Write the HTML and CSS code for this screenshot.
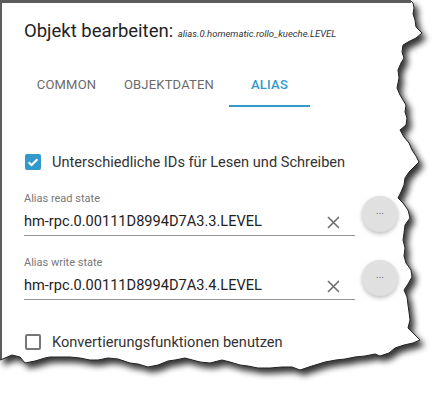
FILE: index.html
```html
<!DOCTYPE html>
<html lang="de">
<head>
    <meta charset="UTF-8">
    <meta name="viewport" content="width=device-width, initial-scale=1.0">
    <title>Objekt bearbeiten</title>
    <link rel="stylesheet" href="styles.css">
</head>
<body>
    <div class="page">
        <!-- torn paper frame, drawn behind the dialog -->
        <svg class="frame" width="444" height="400" viewBox="0 0 444 400">
            <defs>
                <filter id="shadow" x="-10%" y="-10%" width="130%" height="130%">
                    <feGaussianBlur in="SourceAlpha" stdDeviation="3"/>
                    <feOffset dx="4" dy="5"/>
                    <feComponentTransfer><feFuncA type="linear" slope="0.8"/></feComponentTransfer>
                    <feMerge><feMergeNode/><feMergeNode in="SourceGraphic"/></feMerge>
                </filter>
            </defs>
            <path filter="url(#shadow)" fill="#fff" stroke="#222" stroke-width="1"
                d="M0,0 L410,0 L413,3 L414,8 L413,14 L415,20 L416,27 L420,31 L422,33 L416,38 L408,42 L403,45 L402,52 L404,58 L401,63 L398,70 L399,78 L397,88 L400,95 L403,100 L406,105 L405,112 L407,118 L406,125 L400,130 L404,137 L409,143 L412,150 L416,156 L419,162 L414,167 L409,172 L405,178 L404,185 L401,192 L398,198 L403,203 L408,210 L410,218 L405,225 L404,233 L403,240 L405,248 L404,256 L406,263 L411,270 L412,277 L408,284 L404,290 L407,297 L408,305 L409,312 L410,320 L408,328 L414,334 L420,340 L413,343 L404,345 L395,348 L389,353 L380,356 L375,354 L365,356 L355,357 L345,359 L336,360 L325,362 L312,366 L300,370 L292,367 L282,367 L270,368 L258,368 L248,366 L240,365 L230,362 L222,360 L210,363 L200,362 L185,358 L175,360 L168,361 L158,365 L148,367 L138,364 L130,363 L118,359 L108,358 L98,360 L90,360 L80,358 L70,357 L60,357 L50,357 L45,358 L35,361 L25,363 L20,357 L12,355 L5,358 L0,360 Z"/>
            <rect x="0" y="0" width="411" height="3" fill="#5c5c5c"/>
            <rect x="0" y="0" width="2" height="359" fill="#5c5c5c"/>
        </svg>

        <div class="dialog">
            <div class="title">Objekt bearbeiten: <span class="obj-id">alias.0.homematic.rollo_kueche.LEVEL</span></div>

            <div class="tabs">
                <div class="tab tab-common">COMMON</div>
                <div class="tab tab-data">OBJEKTDATEN</div>
                <div class="tab tab-alias active">ALIAS</div>
            </div>

            <div class="check-row">
                <span class="box checked">
                    <svg width="16" height="16" viewBox="0 0 16 16"><polyline points="3.6,8.2 6.6,11 12.4,5.2" fill="none" stroke="#fff" stroke-width="2"/></svg>
                </span>
                <span class="check-label">Unterschiedliche IDs für Lesen und Schreiben</span>
            </div>

            <div class="field-row">
                <div class="field">
                    <div class="field-label">Alias read state</div>
                    <div class="field-input">
                        <span class="value">hm-rpc.0.00111D8994D7A3.3.LEVEL</span>
                        <svg class="clear" width="13" height="13" viewBox="0 0 13 13"><path d="M1 1 L12 12 M12 1 L1 12" stroke="#6f6f6f" stroke-width="1.6"/></svg>
                    </div>
                </div>
                <div class="more">...</div>
            </div>

            <div class="field-row second">
                <div class="field">
                    <div class="field-label">Alias write state</div>
                    <div class="field-input">
                        <span class="value">hm-rpc.0.00111D8994D7A3.4.LEVEL</span>
                        <svg class="clear" width="13" height="13" viewBox="0 0 13 13"><path d="M1 1 L12 12 M12 1 L1 12" stroke="#6f6f6f" stroke-width="1.6"/></svg>
                    </div>
                </div>
                <div class="more">...</div>
            </div>

            <div class="check-row last">
                <span class="box"></span>
                <span class="check-label">Konvertierungsfunktionen benutzen</span>
            </div>
        </div>
    </div>
</body>
</html>
```
FILE: styles.css
```css
* {
    margin: 0;
    padding: 0;
    box-sizing: border-box;
}

body {
    font-family: 'Roboto', 'Liberation Sans', sans-serif;
    background-color: #fff;
    color: rgba(0, 0, 0, 0.87);
}

.page {
    position: relative;
    width: 444px;
    height: 400px;
    overflow: hidden;
}

.frame {
    position: absolute;
    top: 0;
    left: 0;
}

.dialog {
    position: relative;
    padding: 19px 0 0 24px;
}

.title {
    font-size: 18.5px;
    line-height: 24px;
    white-space: nowrap;
    color: #222;
}

.obj-id {
    font-size: 9.5px;
    font-style: italic;
    color: #333;
}

.tabs {
    display: flex;
    margin-top: 19px;
}

.tab {
    height: 42px;
    line-height: 40px;
    text-align: center;
    font-size: 13px;
    font-weight: 400;
    letter-spacing: 0.2px;
    color: #6b6b6b;
    border-bottom: 2px solid transparent;
}

.tab-common { width: 85px; }
.tab-data { width: 120px; }
.tab-alias { width: 81px; }

.tab.active {
    font-weight: 500;
    color: #3399cc;
    border-bottom-color: #3399cc;
}

.check-row {
    display: flex;
    align-items: center;
    height: 24px;
    margin-top: 43px;
}

.check-row.last {
    margin-top: 30px;
}

.box {
    width: 16px;
    height: 16px;
    margin-left: 1px;
    margin-right: 11px;
    border: 2px solid #777;
    border-radius: 2px;
}

.box.checked {
    border: none;
    background-color: #3399cc;
}

.box svg {
    display: block;
}

.check-label {
    font-size: 14.6px;
    color: #333;
}

.field-row {
    display: flex;
    align-items: center;
    margin-top: 18px;
}

.field-row.second {
    margin-top: 20px;
}

.field {
    width: 331px;
}

.field-label {
    font-size: 11px;
    line-height: 14px;
    color: #777;
}

.field-input {
    display: flex;
    align-items: center;
    margin-top: 6px;
    padding-bottom: 4px;
    border-bottom: 1px solid #949494;
}

.value {
    flex: 1;
    font-size: 14.6px;
    line-height: 19px;
    color: #222;
}

.clear {
    margin-right: 15px;
    margin-top: 1px;
}

.more {
    width: 36px;
    height: 36px;
    margin-left: 7px;
    border-radius: 50%;
    background-color: #e0e0e0;
    box-shadow: 0 2px 4px rgba(0, 0, 0, 0.25);
    text-align: center;
    line-height: 30px;
    font-size: 10px;
    color: #666;
}
```
